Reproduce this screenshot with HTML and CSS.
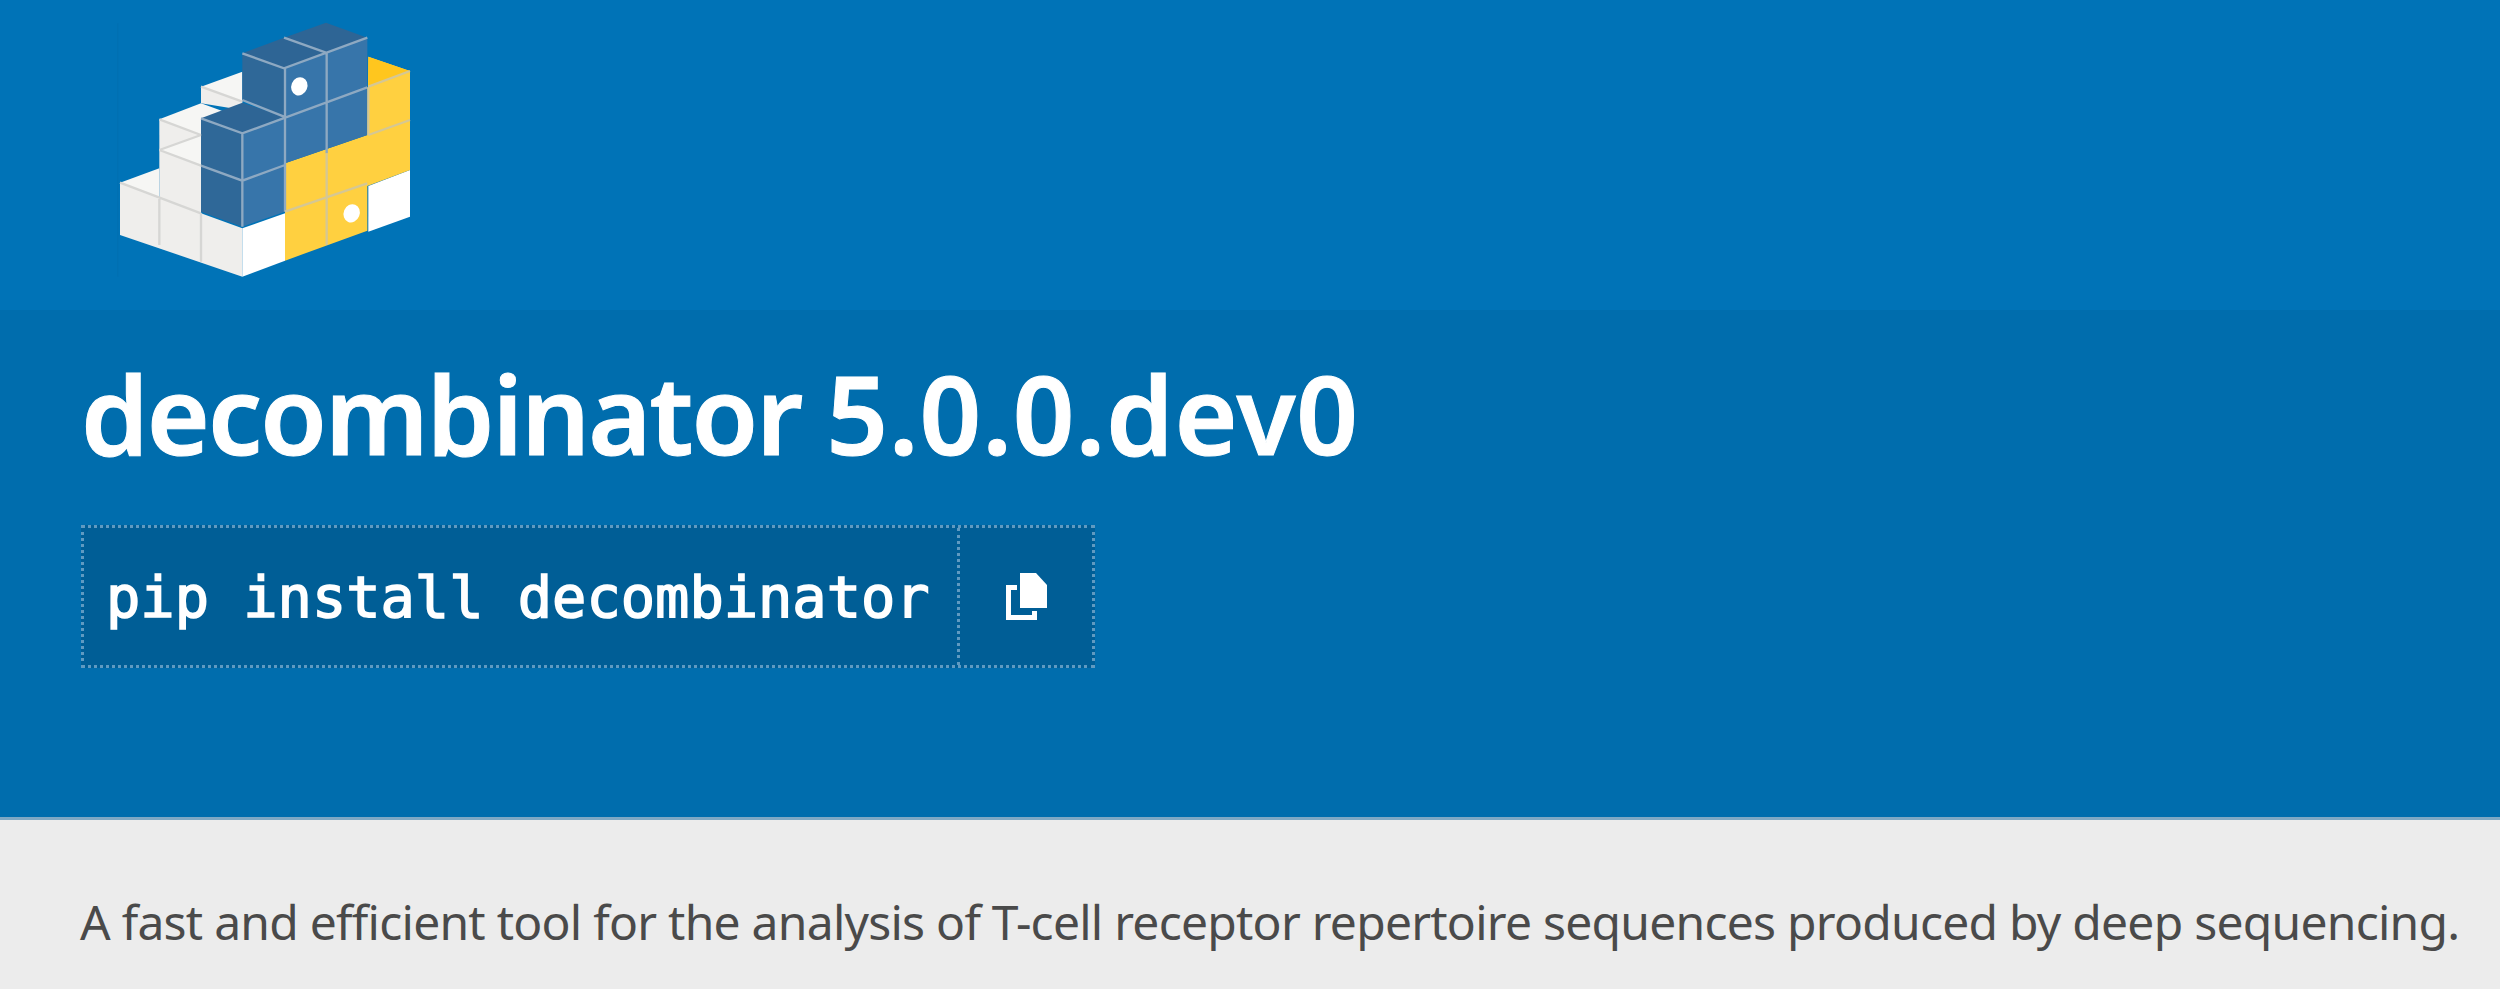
FILE: index.html
```html
<!DOCTYPE html>
<html lang="en">
<head>
<meta charset="utf-8">
<title>decombinator 5.0.0.dev0</title>
<link rel="stylesheet" href="styles.css">
</head>
<body>
<header class="site-top">
<svg class="logo" viewBox="0 0 1140 900" aria-label="PyPI logo">
<rect class="edge" x="112" y="70" width="3" height="760"/>
<g class="white">
<polygon points="120,548 238,595 238,450 363,497 363,640 487,685 487,830 120,705"/>
<polygon points="238,358 363,405 363,450 238,450"/>
<polygon points="363,260 487,305 487,330 363,310"/>
</g>
<g class="white-top">
<polygon points="120,548 238,505 238,597"/>
<polygon points="238,450 363,405 363,497"/>
<polygon points="238,358 363,310 487,355 363,405"/>
<polygon points="363,260 487,215 487,305"/>
</g>
<polygon class="pure" points="487,685 615,640 615,782 487,830"/>
<polygon class="pure" points="865,558 990,510 990,650 865,695"/>
<polygon class="yellow" points="865,170 990,213 990,510 862,558 862,692 615,782 615,490 862,405"/>
<polygon class="yellow-top" points="865,170 990,213 865,258"/>
<polygon class="blue-left" points="363,355 487,400 487,680 363,635"/>
<polygon class="blue-right" points="487,400 612,350 612,205 862,113 862,405 615,490 615,635 487,680"/>
<polygon class="blue-left" points="487,160 612,205 612,348 487,300"/>
<polygon class="blue-top" points="363,355 487,308 612,350 487,400"/>
<polygon class="blue-top" points="487,160 612,113 738,158 612,205"/>
<polygon class="blue-top" points="612,113 738,68 862,113 738,158"/>
<path class="lines-blue" d="M487 400V680M615 205V635M740 158V460M363 355L487 400L862 262M487 160L612 205L862 113M612 113L738 158M363 497L487 542L615 495M487 300L612 350"/>
<path class="lines-yellow" d="M740 460V735M865 262V405M865 260L990 213M865 405L990 360M615 635L862 550"/>
<path class="lines-white" d="M120 548L363 640M238 597V735M363 640V785M238 450L363 497M238 358L363 405M238 450L363 405M363 260L487 305"/>
<ellipse class="eye" cx="658" cy="259" rx="24" ry="28" transform="rotate(22 658 259)"/>
<ellipse class="eye" cx="815" cy="640" rx="24" ry="28" transform="rotate(22 815 640)"/>
</svg>
</header>
<section class="banner">
<h1 class="title"><span class="name">decombinator</span> <span class="version">5.0.0.dev0</span></h1>
<div class="pip">
<span class="pip-text">pip install decombinator</span>
<span class="pip-copy">
<svg class="copy-icon" viewBox="0 0 41 47"><path d="M14 0H30L41 12V35H14Z"/><path d="M0 12H11V17H5V42H26V38H31V47H0Z"/></svg>
</span>
</div>
</section>
<main class="summary">
<p class="summary-text">A fast and efficient tool for the analysis of T-cell receptor repertoire sequences produced by deep sequencing.</p>
</main>
</body>
</html>
```
FILE: styles.css
```css
html, body {
  margin: 0;
  padding: 0;
  height: 100%;
  overflow: hidden;
}
body {
  background: #ececec;
  font-family: "Noto Sans", "Open Sans", sans-serif;
}
.site-top {
  height: 310px;
  background: #0073b7;
  padding-left: 80px;
}
.logo {
  display: block;
  width: 380px;
  height: 300px;
  filter: blur(0.7px);
}
.edge { fill: #006fb0; }
.white polygon { fill: #efeeec; }
.white-top polygon { fill: #f6f6f4; }
.pure { fill: #ffffff; }
.yellow { fill: #ffd040; }
.yellow-top { fill: #ffc61e; }
.blue-left { fill: #2f6898; }
.blue-right { fill: #3775aa; }
.blue-top { fill: #2e6595; }
.lines-blue, .lines-yellow, .lines-white {
  fill: none;
  stroke-width: 7;
}
.lines-blue { stroke: #8ea9c2; }
.lines-yellow { stroke: #d5c794; }
.lines-white { stroke: #d6d6d4; }
.eye { fill: #ffffff; }
.banner {
  box-sizing: border-box;
  height: 510px;
  background: #006dad;
  border-bottom: 3px solid #7ea8c4;
  padding: 32px 80px 0 81px;
}
.title {
  margin: 0;
  color: #ffffff;
  font-size: 108px;
  line-height: 144px;
  font-weight: 600;
  -webkit-text-stroke: 1px #ffffff;
}
.name { letter-spacing: -1.9px; }
.version {
  letter-spacing: 0.85px;
  margin-left: -3px;
}
.pip {
  display: inline-flex;
  margin-top: 39px;
  height: 143px;
  box-sizing: border-box;
  background: #005e96;
  border: 3px dotted #5f9ac1;
  color: #ffffff;
}
.pip-text {
  display: flex;
  align-items: center;
  padding: 0 27px 0 22px;
  font-family: "DejaVu Sans Mono", monospace;
  font-size: 57px;
  font-weight: 400;
  -webkit-text-stroke: 1.6px #ffffff;
  border-right: 3px dotted #5f9ac1;
}
.pip-copy {
  display: flex;
  align-items: center;
  justify-content: center;
  width: 132px;
  padding-left: 2px;
  box-sizing: border-box;
}
.copy-icon {
  width: 41px;
  height: 47px;
  fill: #ffffff;
}
.summary {
  padding: 67px 80px 0;
}
.summary-text {
  margin: 0;
  color: #4a4a4a;
  font-size: 48px;
  line-height: 70px;
  letter-spacing: -0.75px;
  white-space: nowrap;
}
```
